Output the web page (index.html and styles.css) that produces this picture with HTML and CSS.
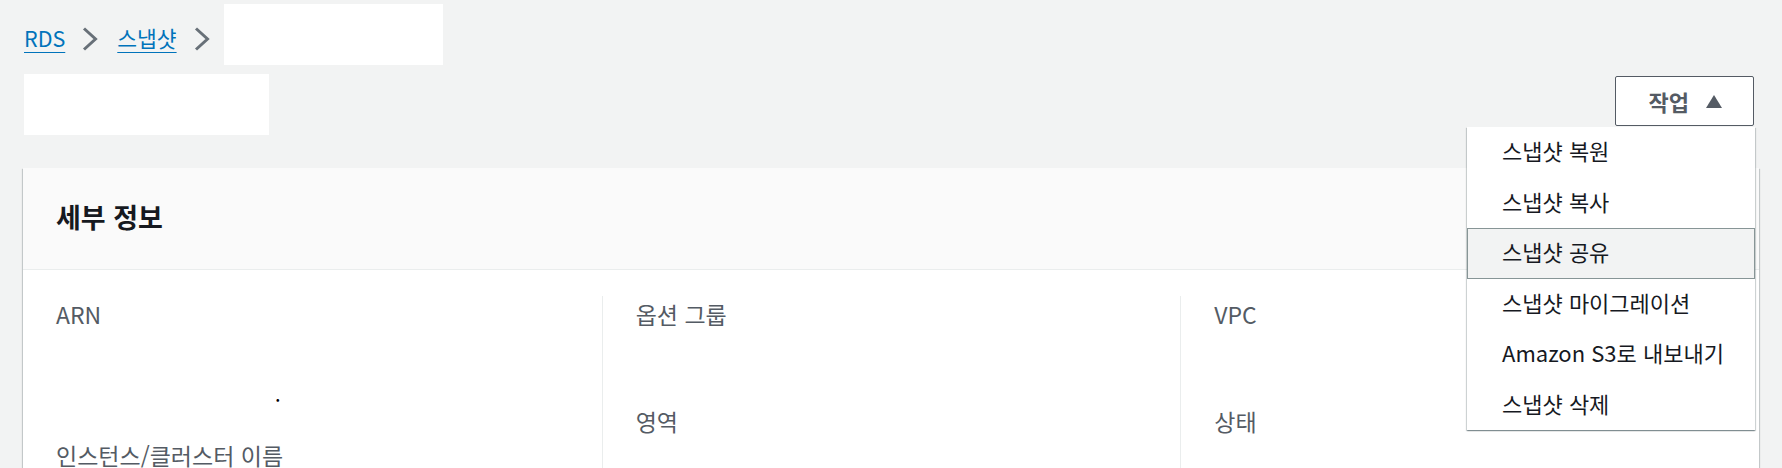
FILE: index.html
```html
<!DOCTYPE html>
<html lang="ko">
<head>
<meta charset="utf-8">
<title>스냅샷</title>
<link rel="stylesheet" href="styles.css">
</head>
<body>
<div class="page">
  <nav class="crumbs">
    <a class="crumb" href="#">RDS</a>
    <svg class="chev" width="16" height="24" viewBox="0 0 16 24"><path d="M2 1.5 L13.5 12 L2 22.5" fill="none" stroke="#687078" stroke-width="3"/></svg>
    <a class="crumb" href="#">스냅샷</a>
    <svg class="chev chev-last" width="16" height="24" viewBox="0 0 16 24"><path d="M2 1.5 L13.5 12 L2 22.5" fill="none" stroke="#687078" stroke-width="3"/></svg>
    <span class="redact redact-crumb"></span>
  </nav>
  <div class="title-row">
    <span class="redact redact-title"></span>
    <div class="actions">
      <button class="btn" type="button">작업 <svg class="tri" width="16" height="13" viewBox="0 0 16 13"><path d="M8 0 L16 13 L0 13 Z" fill="#545b64"/></svg></button>
      <ul class="menu">
        <li class="item">스냅샷 복원</li>
        <li class="item">스냅샷 복사</li>
        <li class="item item-hover">스냅샷 공유</li>
        <li class="item">스냅샷 마이그레이션</li>
        <li class="item">Amazon S3로 내보내기</li>
        <li class="item">스냅샷 삭제</li>
      </ul>
    </div>
  </div>
  <section class="panel">
    <header class="panel-head"><h2 class="panel-title">세부 정보</h2></header>
    <div class="panel-body">
      <div class="col">
        <div class="kv"><div class="label">ARN</div><div class="value value-2"><span class="dot">.</span></div></div>
        <div class="kv"><div class="label label-last">인스턴스/클러스터 이름</div></div>
      </div>
      <div class="col col-div">
        <div class="kv"><div class="label">옵션 그룹</div><div class="value"></div></div>
        <div class="kv"><div class="label">영역</div></div>
      </div>
      <div class="col col-div">
        <div class="kv"><div class="label">VPC</div><div class="value"></div></div>
        <div class="kv"><div class="label">상태</div></div>
      </div>
    </div>
  </section>
</div>
</body>
</html>
```
FILE: styles.css
```css
* { box-sizing: border-box; }
html, body { margin: 0; padding: 0; }
body {
  background: #f2f3f3;
  font-family: "Noto Sans CJK KR", "Noto Sans", sans-serif;
  color: #16191f;
}
.page {
  padding: 4px 23px 0 23px;
  height: 468px;
  overflow: hidden;
}
.crumbs {
  display: flex;
  align-items: flex-start;
  height: 61px;
  padding-left: 1px;
}
.crumb {
  color: #0073bb;
  font-size: 21.5px;
  line-height: 28px;
  margin-top: 20px;
  text-decoration: underline;
  text-underline-offset: 5px;
  text-decoration-thickness: 1px;
}
.chev { margin: 23px 19px 0 17px; }
.chev-last { margin-right: 14px; }
.redact { background: #fff; display: block; }
.redact-crumb { width: 219px; height: 61px; }
.title-row {
  display: flex;
  justify-content: space-between;
  align-items: flex-start;
  margin-top: 9px;
  height: 61px;
}
.redact-title { width: 245px; height: 61px; margin-left: 1px; }
.actions { position: relative; margin-top: 2px; margin-right: 5px; }
.btn {
  display: flex;
  align-items: center;
  gap: 17px;
  height: 50px;
  padding: 0 31px 0 33px;
  background: #fff;
  border: 1px solid #545b64;
  border-radius: 2px;
  font-family: inherit;
  font-size: 22px;
  font-weight: 700;
  color: #545b64;
}
.menu {
  position: absolute;
  top: 51px;
  right: -1px;
  width: 288px;
  margin: 0;
  padding: 0;
  list-style: none;
  background: #fff;
  z-index: 5;
  box-shadow: 0 1px 1px 0 rgba(0,28,36,.3), 1px 1px 1px 0 rgba(0,28,36,.15), -1px 1px 1px 0 rgba(0,28,36,.15);
}
.item {
  height: 50.5px;
  line-height: 45px;
  padding-left: 34px;
  font-size: 22px;
  color: #16191f;
  border: 1px solid transparent;
  white-space: nowrap;
}
.item-hover { background: #f2f3f3; border-color: #879596; }
.panel {
  margin-top: 33px;
  background: #fff;
  box-shadow: 0 1px 1px 0 rgba(0,28,36,.3), 1px 1px 1px 0 rgba(0,28,36,.15), -1px 1px 1px 0 rgba(0,28,36,.15);
}
.panel-head {
  background: #fafafa;
  height: 102px;
  border-bottom: 1px solid #eaeded;
  display: flex;
  align-items: center;
  padding-left: 33px;
  padding-bottom: 4px;
}
.panel-title { margin: 0; font-size: 27px; font-weight: 700; color: #16191f; }
.panel-body {
  display: grid;
  grid-template-columns: 1fr 1fr 1fr;
  padding-top: 26px;
  min-height: 260px;
}
.col { padding-left: 33px; }
.col-div { border-left: 1px solid #eaeded; }
.label { font-size: 23px; line-height: 36px; color: #545b64; }
.label-last { line-height: 20px; margin-top: 7px; }
.value { height: 71px; line-height: 35px; }
.value-2 { height: 106px; padding-top: 44px; padding-left: 219px; }
.dot { color: #000; font-size: 20px; }
```
